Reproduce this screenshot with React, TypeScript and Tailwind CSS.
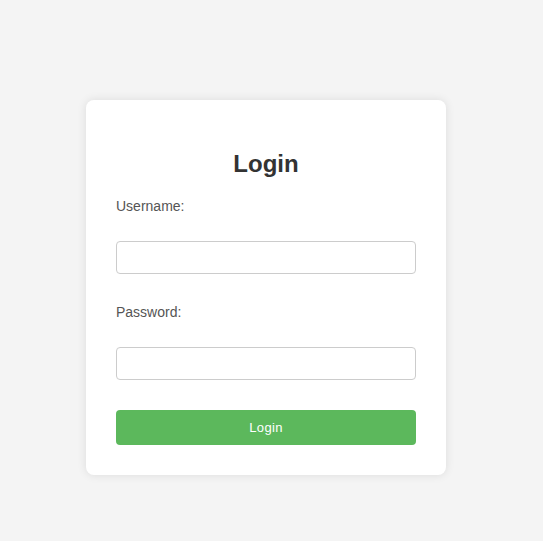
import React from 'react';

export default function App() {
  return (
    <div className="min-h-[541px] bg-[#f4f4f4] pt-[100px] pl-[86px] font-['Liberation_Sans',Arial,sans-serif]">
      <div className="w-[360px] bg-white rounded-lg shadow-[0_0_10px_rgba(0,0,0,0.1)] px-[30px] pb-[30px] pt-[30px]">
        <h2 className="mt-5 mb-5 text-center text-2xl leading-7 font-bold text-[#333]">Login</h2>
        <form onSubmit={(e) => e.preventDefault()}>
          <label className="block text-sm leading-4 text-[#555]">Username:</label>
          <input
            type="text"
            className="block mt-[27px] w-full h-[33px] border border-[#ccc] rounded bg-white px-2 text-sm outline-none"
          />
          <label className="block mt-[30px] text-sm leading-4 text-[#555]">Password:</label>
          <input
            type="password"
            className="block mt-[27px] w-full h-[33px] border border-[#ccc] rounded bg-white px-2 text-sm outline-none"
          />
          <button
            type="submit"
            className="block mt-[30px] w-full h-[35px] rounded bg-[#5cb85c] text-white text-[13px] tracking-wide"
          >
            Login
          </button>
        </form>
      </div>
    </div>
  );
}
